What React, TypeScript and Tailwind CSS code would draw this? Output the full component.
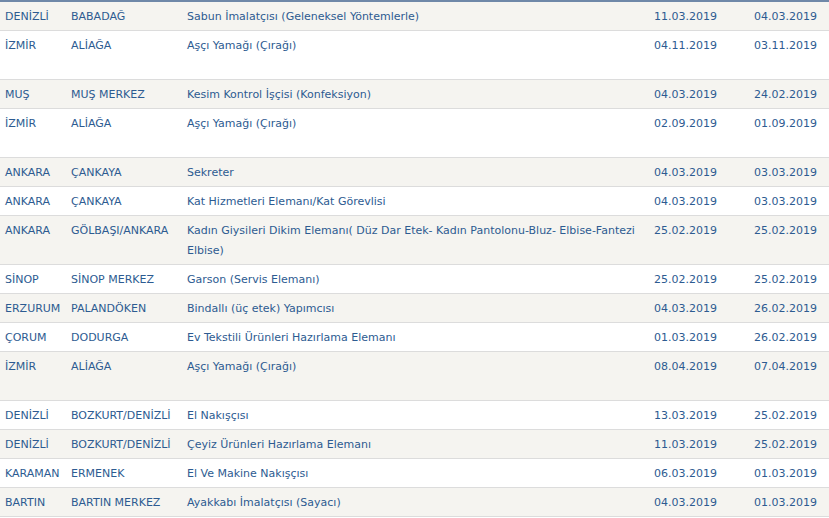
import React from "react";

type Row = {
  city: string;
  district: string;
  job: string;
  start: string;
  posted: string;
  tall?: boolean;
};

const rows: Row[] = [
  { city: "DENİZLİ", district: "BABADAĞ", job: "Sabun İmalatçısı (Geleneksel Yöntemlerle)", start: "11.03.2019", posted: "04.03.2019" },
  { city: "İZMİR", district: "ALİAĞA", job: "Aşçı Yamağı (Çırağı)", start: "04.11.2019", posted: "03.11.2019", tall: true },
  { city: "MUŞ", district: "MUŞ MERKEZ", job: "Kesim Kontrol İşçisi (Konfeksiyon)", start: "04.03.2019", posted: "24.02.2019" },
  { city: "İZMİR", district: "ALİAĞA", job: "Aşçı Yamağı (Çırağı)", start: "02.09.2019", posted: "01.09.2019", tall: true },
  { city: "ANKARA", district: "ÇANKAYA", job: "Sekreter", start: "04.03.2019", posted: "03.03.2019" },
  { city: "ANKARA", district: "ÇANKAYA", job: "Kat Hizmetleri Elemanı/Kat Görevlisi", start: "04.03.2019", posted: "03.03.2019" },
  { city: "ANKARA", district: "GÖLBAŞI/ANKARA", job: "Kadın Giysileri Dikim Elemanı( Düz Dar Etek- Kadın Pantolonu-Bluz- Elbise-Fantezi Elbise)", start: "25.02.2019", posted: "25.02.2019" },
  { city: "SİNOP", district: "SİNOP MERKEZ", job: "Garson (Servis Elemanı)", start: "25.02.2019", posted: "25.02.2019" },
  { city: "ERZURUM", district: "PALANDÖKEN", job: "Bindallı (üç etek) Yapımcısı", start: "04.03.2019", posted: "26.02.2019" },
  { city: "ÇORUM", district: "DODURGA", job: "Ev Tekstili Ürünleri Hazırlama Elemanı", start: "01.03.2019", posted: "26.02.2019" },
  { city: "İZMİR", district: "ALİAĞA", job: "Aşçı Yamağı (Çırağı)", start: "08.04.2019", posted: "07.04.2019", tall: true },
  { city: "DENİZLİ", district: "BOZKURT/DENİZLİ", job: "El Nakışçısı", start: "13.03.2019", posted: "25.02.2019" },
  { city: "DENİZLİ", district: "BOZKURT/DENİZLİ", job: "Çeyiz Ürünleri Hazırlama Elemanı", start: "11.03.2019", posted: "25.02.2019" },
  { city: "KARAMAN", district: "ERMENEK", job: "El Ve Makine Nakışçısı", start: "06.03.2019", posted: "01.03.2019" },
  { city: "BARTIN", district: "BARTIN MERKEZ", job: "Ayakkabı İmalatçısı (Sayacı)", start: "04.03.2019", posted: "01.03.2019" },
];

const cell = "pl-[5px] pt-[5px] pb-[3px] border-b border-[#dcdcdc]";

export default function App() {
  return (
    <div className="w-[829px] h-[518px] overflow-hidden bg-white border-t-2 border-[#6f88a8] font-['DejaVu_Sans',Verdana,sans-serif] text-[11px] leading-5 text-[#2d5b91]">
      <table className="w-full table-fixed border-separate border-spacing-0">
        <colgroup>
          <col className="w-[66px]" />
          <col className="w-[116px]" />
          <col className="w-[467px]" />
          <col className="w-[100px]" />
          <col />
        </colgroup>
        <tbody>
          {rows.map((r, i) => (
            <tr key={i} className={`align-top ${i % 2 === 0 ? "bg-[#f5f4f0]" : "bg-white"}`}>
              <td className={`${cell} whitespace-nowrap ${r.tall ? "h-[49px]" : "h-[29px]"}`}>{r.city}</td>
              <td className={`${cell} whitespace-nowrap`}>{r.district}</td>
              <td className={`${cell} pr-1`}>{r.job}</td>
              <td className={`${cell} whitespace-nowrap`}>{r.start}</td>
              <td className={`${cell} whitespace-nowrap`}>{r.posted}</td>
            </tr>
          ))}
        </tbody>
      </table>
    </div>
  );
}
